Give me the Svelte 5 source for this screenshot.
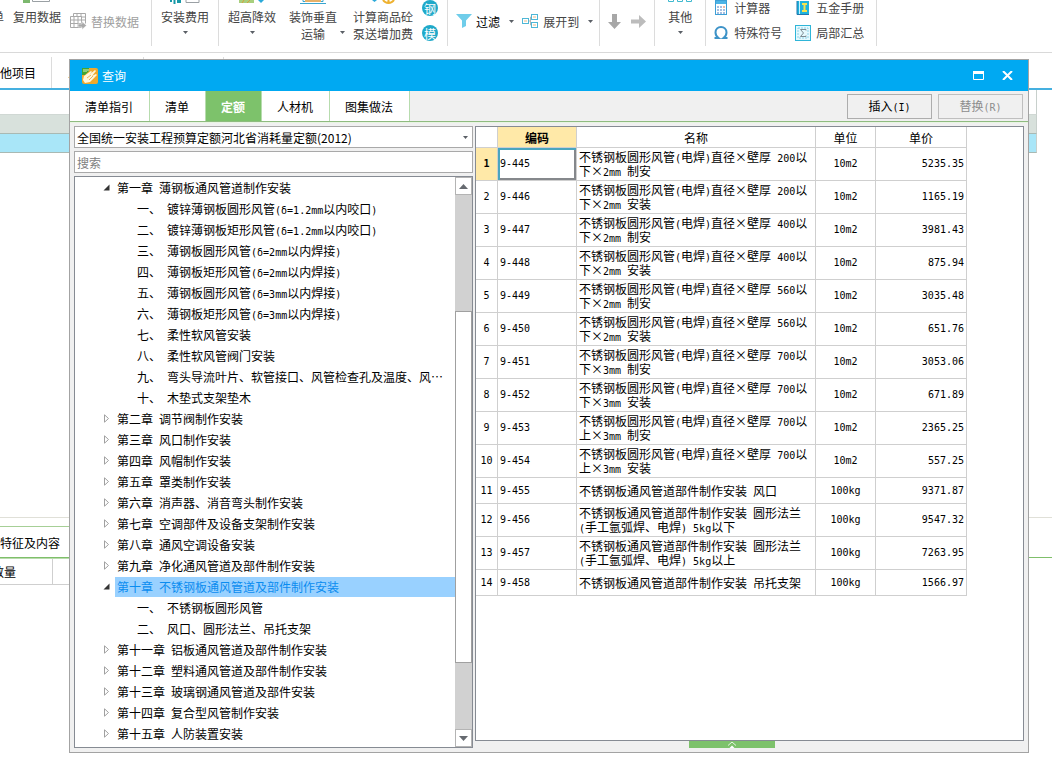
<script>
    const dialogTabs = ["清单指引", "清单", "定额", "人材机", "图集做法"];
    let activeTab = $state("定额");
    let keyword = $state("");
    let selectedChapter = $state("第十章 不锈钢板通风管道及部件制作安装");
    let selectedCode = $state("9-445");

    const tree = [
        { level: 1, open: true, label: "第一章 薄钢板通风管道制作安装" },
        { level: 2, label: "一、 镀锌薄钢板圆形风管(δ=1.2mm以内咬口)" },
        { level: 2, label: "二、 镀锌薄钢板矩形风管(δ=1.2mm以内咬口)" },
        { level: 2, label: "三、 薄钢板圆形风管(δ=2mm以内焊接)" },
        { level: 2, label: "四、 薄钢板矩形风管(δ=2mm以内焊接)" },
        { level: 2, label: "五、 薄钢板圆形风管(δ=3mm以内焊接)" },
        { level: 2, label: "六、 薄钢板矩形风管(δ=3mm以内焊接)" },
        { level: 2, label: "七、 柔性软风管安装" },
        { level: 2, label: "八、 柔性软风管阀门安装" },
        { level: 2, label: "九、 弯头导流叶片、软管接口、风管检查孔及温度、风⋯" },
        { level: 2, label: "十、 木垫式支架垫木" },
        { level: 1, label: "第二章 调节阀制作安装" },
        { level: 1, label: "第三章 风口制作安装" },
        { level: 1, label: "第四章 风帽制作安装" },
        { level: 1, label: "第五章 罩类制作安装" },
        { level: 1, label: "第六章 消声器、消音弯头制作安装" },
        { level: 1, label: "第七章 空调部件及设备支架制作安装" },
        { level: 1, label: "第八章 通风空调设备安装" },
        { level: 1, label: "第九章 净化通风管道及部件制作安装" },
        { level: 1, open: true, label: "第十章 不锈钢板通风管道及部件制作安装" },
        { level: 2, label: "一、 不锈钢板圆形风管" },
        { level: 2, label: "二、 风口、圆形法兰、吊托支架" },
        { level: 1, label: "第十一章 铝板通风管道及部件制作安装" },
        { level: 1, label: "第十二章 塑料通风管道及部件制作安装" },
        { level: 1, label: "第十三章 玻璃钢通风管道及部件安装" },
        { level: 1, label: "第十四章 复合型风管制作安装" },
        { level: 1, label: "第十五章 人防装置安装" },
    ];

    const duct = "不锈钢板圆形风管(电焊)直径×壁厚 ";
    const part = "不锈钢板通风管道部件制作安装 ";
    const items = [
        { code: "9-445", name: duct + "200以\n下×2mm 制安", unit: "10m2", price: "5235.35" },
        { code: "9-446", name: duct + "200以\n下×2mm 安装", unit: "10m2", price: "1165.19" },
        { code: "9-447", name: duct + "400以\n下×2mm 制安", unit: "10m2", price: "3981.43" },
        { code: "9-448", name: duct + "400以\n下×2mm 安装", unit: "10m2", price: "875.94" },
        { code: "9-449", name: duct + "560以\n下×2mm 制安", unit: "10m2", price: "3035.48" },
        { code: "9-450", name: duct + "560以\n下×2mm 安装", unit: "10m2", price: "651.76" },
        { code: "9-451", name: duct + "700以\n下×3mm 制安", unit: "10m2", price: "3053.06" },
        { code: "9-452", name: duct + "700以\n下×3mm 安装", unit: "10m2", price: "671.89" },
        { code: "9-453", name: duct + "700以\n上×3mm 制安", unit: "10m2", price: "2365.25" },
        { code: "9-454", name: duct + "700以\n上×3mm 安装", unit: "10m2", price: "557.25" },
        { code: "9-455", name: part + "风口", unit: "100kg", price: "9371.87" },
        { code: "9-456", name: part + "圆形法兰\n(手工氩弧焊、电焊) 5kg以下", unit: "100kg", price: "9547.32" },
        { code: "9-457", name: part + "圆形法兰\n(手工氩弧焊、电焊) 5kg以上", unit: "100kg", price: "7263.95" },
        { code: "9-458", name: part + "吊托支架", unit: "100kg", price: "1566.97" },
    ];

    // half-width runs get the monospaced face
    function runs(text) {
        return text.split(/([ -~δ]+)/).filter(Boolean).map((t) => ({ t, half: /^[ -~δ]/.test(t) }));
    }
</script>

{#snippet mixed(text)}{#each runs(text) as run}{#if run.half}<span class="half">{run.t}</span>{:else}{run.t}{/if}{/each}{/snippet}

{#snippet caret()}
    <svg class="caret" width="5" height="3" viewBox="0 0 5 3" aria-hidden="true"><path d="M0 0h5L2.5 3z" fill="#5a5f66" /></svg>
{/snippet}

<div class="app">
    <header class="ribbon">
        <div class="group first">
            <button class="big"><span class="slot"></span>单</button>
            <button class="big">
                <span class="slot">
                    <svg width="28" height="3" viewBox="0 0 28 3"><path d="M0 3V0h7v3z" fill="#7cb86e" /><path d="M9.500 0v1.500h17V0" fill="none" stroke="#9aa0a4" /></svg>
                </span>
                复用数据
            </button>
            <button class="inline muted">
                <svg width="17" height="17" viewBox="0 0 17 17" fill="none" stroke="#a9a9a9">
                    <path d="M3.500.5h12v10M3.500.5v3M.5 3.500h11v11H.5zM.5 7h11M.5 10.500h11M4 3.500v11M8 3.500v11M7 .5v3M11 .5v3M15 4h-4M15 7h-4" />
                    <path d="M8 11h4V8.500l4.500 4-4.500 4V14H8z" fill="#a9a9a9" stroke="#fff" stroke-width=".5" />
                </svg>
                替换数据
            </button>
        </div>
        <div class="group">
            <button class="big">
                <span class="slot">
                    <svg width="30" height="4" viewBox="0 0 30 4"><path d="M1 0v2M4.500 0v4M8 0v3M10 0v3" stroke="#1899a8" stroke-width="2" /><path d="M16 0v2.500h13V0" fill="none" stroke="#9aa0a4" /></svg>
                </span>
                安装费用
                {@render caret()}
            </button>
        </div>
        <div class="group">
            <button class="big">
                <span class="slot">
                    <svg width="26" height="4" viewBox="0 0 26 4"><path d="M0 0h15v3H0z" fill="#a8cf7d" /><path d="M3 3l2-3M8 3l3-3" stroke="#d99c3c" /><path d="M19 0h6l-3 3z" fill="#2ba9d9" /></svg>
                </span>
                超高降效
                {@render caret()}
            </button>
            <button class="big">
                <span class="slot">
                    <svg width="26" height="4" viewBox="0 0 26 4"><path d="M3 0v1.500h20V0M0 3.500h26" fill="none" stroke="#37a5d0" /><path d="M5 0h16v2H5z" fill="#e6b169" /></svg>
                </span>
                装饰垂直<br />运输
            </button>
            <span class="side-caret">{@render caret()}</span>
            <button class="big">
                <span class="slot">
                    <svg width="28" height="4" viewBox="0 0 28 4"><path d="M3 0h5L5.500 2z" fill="#2ba9d9" /><path d="M14 0q2 3 5.500 3T25 0M19.500 0v3" fill="none" stroke="#eeb12f" stroke-width="2" /></svg>
                </span>
                计算商品砼<br />泵送增加费
            </button>
            <div class="rounds">
                <button class="round">钢</button>
                <button class="round">模</button>
            </div>
        </div>
        <div class="group filters">
            <button class="inline dark">
                <svg width="16" height="14" viewBox="0 0 16 14"><path d="M0 0h16l-6 6.500V12l-4 2V6.500z" fill="#6fcdea" /></svg>
                过滤
                {@render caret()}
            </button>
            <button class="inline">
                <svg width="17" height="15" viewBox="0 0 17 15" fill="none">
                    <path d="M6 7h2.500M8.500 3v8H10M8.500 3H10" stroke="#b5b5b5" />
                    <rect x=".5" y="4.500" width="6" height="5" stroke="#4fb7d6" />
                    <rect x="9.500" y=".5" width="6" height="5" stroke="#4fb7d6" />
                    <rect x="9.500" y="8.500" width="6" height="5" stroke="#4fb7d6" />
                    <path d="M2 7h3M11 3h3M11 11h3" stroke="#e8b984" />
                </svg>
                展开到
                {@render caret()}
            </button>
        </div>
        <div class="group arrows">
            <button class="inline" aria-label="下移"><svg width="13" height="15" viewBox="0 0 13 15"><path d="M4 0h5v8h4l-6.500 7L0 8h4z" fill="#a7a7a7" /></svg></button>
            <button class="inline" aria-label="右移"><svg width="15" height="13" viewBox="0 0 15 13"><path d="M0 4.500h8V0l7 6.500L8 13V8.500H0z" fill="#bcbcbc" /></svg></button>
        </div>
        <div class="group">
            <button class="big">
                <span class="slot">
                    <svg width="26" height="3" viewBox="0 0 26 3" fill="none" stroke="#3fb9cf"><path d="M1.500 0v1.500h5V0M10.500 0v1.500h5V0M19.500 0v1.500h5V0" /></svg>
                </span>
                其他
                {@render caret()}
            </button>
        </div>
        <div class="group tools">
            <button class="tool">
                <svg width="16" height="16" viewBox="0 0 16 16"><rect x="2.500" y=".5" width="11" height="14" fill="#fff" stroke="#3d9fd6" /><path d="M3 1h10v3H3z" fill="#4db4e6" /><path d="M4 7h2M7 7h2M4 10h2M7 10h2M4 13h2M7 13h2M10 10h2M10 13h2" stroke="#4d7fc4" /><path d="M10 7h2" stroke="#e07050" /></svg>
                计算器
            </button>
            <button class="tool">
                <svg width="16" height="16" viewBox="0 0 16 16"><path d="M2 1h12v13H2z" fill="#1fb3dd" /><path d="M2 1v13.500h12" fill="none" stroke="#2277ad" /><path d="M4.500 1v13" stroke="#c8f0ff" /><path d="M7 4h5M7 11h5M9.500 4v7" stroke="#f6e34f" stroke-width="2" /></svg>
                五金手册
            </button>
            <button class="tool">
                <svg width="16" height="16" viewBox="0 0 16 16"><path d="M1.500 13h4c-2-1.500-3-3.500-3-5.500C2.500 4 5 2 8 2s5.500 2 5.500 5.500c0 2-1 4-3 5.500h4" fill="none" stroke="#3d93c8" stroke-width="2" /></svg>
                特殊符号
            </button>
            <button class="tool">
                <svg width="16" height="16" viewBox="0 0 16 16" fill="none"><rect x=".5" y=".5" width="15" height="15" fill="#e4f9fe" stroke="#2fb5d8" /><path d="M3 3h10v10H3z" stroke="#8ed2e8" stroke-dasharray="2 1" /><path d="M11 5.500V4.500H5.500L8.500 8l-3 3.500H11v-1" stroke="#7d8b92" /></svg>
                局部汇总
            </button>
        </div>
    </header>

    <nav class="page-tabs">
        <a href="#other">其他项目</a>
        <a href="#labour">人材机汇总</a>
        <a href="#fee">费用汇总</a>
    </nav>

    <div class="sheet">
        <div class="line"></div>
        <div class="line summary"></div>
        <div class="line current"></div>
    </div>
    <div class="detail">
        <div class="detail-tabs"><a href="#feature">特征及内容</a></div>
        <div class="detail-head"><span>数量</span></div>
    </div>

    <section class="dialog" role="dialog" aria-labelledby="dialog-title">
        <div class="titlebar">
            <svg width="16" height="16" viewBox="0 0 16 16">
                <rect width="16" height="16" rx="2" fill="#f0a92c" />
                <path d="M0 0h7v3L3 7H0z" fill="#3fa535" />
                <path d="M2 1v3M4 1v3M6 1v2" stroke="#d9f2c4" />
                <path d="M2 8l7-5 1 1-3 3 6-5 1 1-4 5 4-2 1 1-7 7-5 1-2-3z" fill="#fff6dc" />
                <path d="M5 10l4-3M7 12l4-4" stroke="#eab35c" />
            </svg>
            <h1 id="dialog-title">查询</h1>
            <button aria-label="最大化"><svg width="11" height="9" viewBox="0 0 11 9"><path d="M.5.500h10v8H.5z" fill="none" stroke="#fff" /><path d="M0 0h11v3H0z" fill="#fff" /></svg></button>
            <button aria-label="关闭"><svg width="11" height="9" viewBox="0 0 11 9"><path d="M1 0l9 9M10 0L1 9" stroke="#fff" stroke-width="2" /></svg></button>
        </div>

        <div class="tabbar">
            {#each dialogTabs as tab}
                <button class="tab" class:active={tab === activeTab} onclick={() => (activeTab = tab)}>{tab}</button>
            {/each}
            <div class="actions">
                <button>{@render mixed("插入(I)")}</button>
                <button disabled>{@render mixed("替换(R)")}</button>
            </div>
        </div>

        <div class="body">
            <div class="left">
                <div class="combo">
                    <select aria-label="定额库">
                        <option>全国统一安装工程预算定额河北省消耗量定额(2012)</option>
                    </select>
                    {@render caret()}
                </div>
                <input class="search" type="text" placeholder="搜索" aria-label="搜索" bind:value={keyword} />
                <div class="tree-box">
                    <ul class="tree">
                        {#each tree as node}
                            <li class:child={node.level === 2}>
                                {#if node.level === 1}
                                    <svg class="twisty" width="7" height="9" viewBox="0 0 7 9" aria-hidden="true">
                                        {#if node.open}
                                            <path d="M6.500 1.500v6H.5z" fill="#333" />
                                        {:else}
                                            <path d="M1.500.8v7.400L5.500 4.500z" fill="none" stroke="#a0a0a0" />
                                        {/if}
                                    </svg>
                                {/if}
                                <button class:selected={node.label === selectedChapter} onclick={() => (selectedChapter = node.label)}>{@render mixed(node.label)}</button>
                            </li>
                        {/each}
                    </ul>
                    <div class="scrollbar" aria-hidden="true">
                        <span class="step"><svg width="9" height="5" viewBox="0 0 9 5"><path d="M0 5h9L4.500 0z" fill="#666a70" /></svg></span>
                        <span class="before"></span>
                        <span class="thumb"></span>
                        <span class="after"></span>
                        <span class="step"><svg width="9" height="5" viewBox="0 0 9 5"><path d="M0 0h9L4.500 5z" fill="#666a70" /></svg></span>
                    </div>
                </div>
            </div>

            <div class="right">
                <div class="grid-box">
                    <table>
                        <colgroup>
                            <col class="c-no" />
                            <col class="c-code" />
                            <col class="c-name" />
                            <col class="c-unit" />
                            <col class="c-price" />
                        </colgroup>
                        <thead>
                            <tr>
                                <th></th>
                                <th class="hot">编码</th>
                                <th>名称</th>
                                <th>单位</th>
                                <th>单价</th>
                            </tr>
                        </thead>
                        <tbody>
                            {#each items as item, i}
                                <tr class:tall={item.name.includes("\n")} onclick={() => (selectedCode = item.code)}>
                                    <td class="no half" class:hot={item.code === selectedCode}>{i + 1}</td>
                                    <td class="half" class:focus={item.code === selectedCode}>{item.code}</td>
                                    <td class="name">{@render mixed(item.name)}</td>
                                    <td class="unit half">{item.unit}</td>
                                    <td class="price half">{item.price}</td>
                                </tr>
                            {/each}
                        </tbody>
                    </table>
                </div>
                <button class="handle" aria-label="展开">
                    <svg width="10" height="7" viewBox="0 0 10 7"><path d="M1 4.500l4-3.500 4 3.500" fill="none" stroke="#e8f5e2" /><path d="M2.500 7L5 4.500 7.500 7z" fill="#fff" /></svg>
                </button>
            </div>
        </div>
    </section>
</div>

<style>
    :global(body) {
        background: #fff;
    }

    .app {
        position: relative;
        display: flex;
        flex-direction: column;
        min-height: 100vh;
        overflow: hidden;
        font-family: "Noto Sans CJK SC", "Liberation Sans", sans-serif;
        font-size: 12px;
        line-height: 17px;
        color: #000;
    }

    button,
    input,
    select {
        margin: 0;
        padding: 0;
        border: 0;
        border-radius: 0;
        background: none;
        font: inherit;
        color: inherit;
    }

    svg {
        display: block;
        flex: none;
    }

    a {
        color: inherit;
        text-decoration: none;
    }

    .half {
        font-family: "DejaVu Sans Mono", monospace;
        font-size: 10px;
    }

    /* ribbon */
    .ribbon {
        display: flex;
        align-items: flex-start;
        height: 52px;
        border-bottom: 1px solid #d9d9d9;
        color: #444;
        white-space: nowrap;
    }

    .group {
        display: flex;
        align-items: flex-start;
        height: 46px;
        padding: 0 9px;
        border-right: 1px solid #dcdcdc;
    }

    .group.first {
        gap: 9px;
        margin-left: -17px;
        padding-right: 12px;
    }

    .big {
        display: block;
        line-height: 17px;
        text-align: center;
    }

    .big .slot {
        display: flex;
        justify-content: center;
        height: 8px;
    }

    .big .caret {
        margin: 6px auto 0;
    }

    .big + .big {
        margin-left: 13px;
    }

    .group.first .big + .big {
        margin-left: 0;
    }

    .side-caret {
        padding: 31px 8px 0 3px;
    }

    .rounds {
        display: grid;
        gap: 9px;
        margin-left: 9px;
    }

    .round {
        width: 16px;
        height: 16px;
        border-radius: 50%;
        background: #1fa9c9;
        color: #fff;
        font-size: 12px;
        line-height: 15px;
    }

    .inline {
        display: flex;
        align-items: center;
        gap: 4px;
        height: 42px;
    }

    .inline .caret {
        margin-left: 5px;
    }

    .muted {
        color: #a0a0a0;
    }

    .dark {
        color: #000;
    }

    .group.filters {
        gap: 8px;
        padding: 0 6px 0 8px;
    }

    .group.arrows {
        gap: 10px;
        height: 39px;
        padding: 0 8px;
    }

    .group.arrows + .group {
        padding: 0 12px;
        border-left: 1px solid #dcdcdc;
        margin-left: -1px;
    }

    .group.tools {
        display: grid;
        grid-template-columns: auto auto;
        grid-auto-rows: 16px;
        gap: 9px 13px;
        padding: 0 12px 0 7px;
    }

    .tool {
        display: flex;
        align-items: center;
        gap: 5px;
        height: 15px;
    }

    /* page behind the dialog */
    .page-tabs {
        display: flex;
        padding-top: 4px;
        border-bottom: 2px solid #45b0e0;
        margin-left: -28px;
    }

    .page-tabs a {
        padding: 7px 15px 7px 16px;
        border-right: 1px solid #dcdcdc;
    }

    .sheet {
        flex: 1;
        margin-right: 15px;
    }

    .line {
        height: 24px;
        border-right: 1px solid #c8d0cc;
        border-bottom: 1px solid #d0d8d4;
    }

    .line.summary,
    .line.current {
        height: 18px;
        background: #d8e1dc;
        border-bottom-color: #a9b9b3;
    }

    .line.current {
        background: #a9e6f8;
    }

    .detail {
        height: 241px;
        border-top: 1px solid #e0e0d8;
    }

    .detail-tabs {
        margin-top: 8px;
        border-bottom: 1px solid #7fbf6a;
    }

    .detail-tabs a {
        display: block;
        width: 90%;
        padding: 7px 0 6px;
        border-top: 1px solid #a6cf96;
    }

    .detail-head {
        display: flex;
        width: 90%;
        border-top: 1px solid #b9dcae;
        border-bottom: 1px solid #cfcfcf;
    }

    .detail-head span {
        margin-left: -8px;
        padding: 4px 36px 4px 0;
        border-right: 1px solid #cfcfcf;
    }

    /* dialog */
    .dialog {
        position: absolute;
        inset: 59px 23px 6px 69px;
        display: flex;
        flex-direction: column;
        border: 1px solid #a3a3a3;
        background: #f0f0f0;
    }

    .titlebar {
        display: flex;
        align-items: center;
        height: 31px;
        padding: 0 6px 0 12px;
        background: #00a9f2;
        color: #fff;
    }

    .titlebar h1 {
        flex: 1;
        margin: 0 0 0 4px;
        font-size: 12px;
        font-weight: 400;
    }

    .titlebar button {
        display: grid;
        place-items: center;
        width: 29px;
        height: 27px;
    }

    .tabbar {
        display: flex;
        height: 30px;
        border-bottom: 1px solid #8fbb80;
    }

    .tab {
        padding: 0 16px 0 15px;
        border-right: 1px solid #b7dcae;
        background: #fff;
    }

    .tab.active {
        background: #7dc26b;
        color: #fff;
        font-weight: 700;
    }

    .actions {
        display: flex;
        gap: 6px;
        margin-left: auto;
        padding: 3px 5px 2px;
    }

    .actions button {
        width: 85px;
        border: 1px solid #adadad;
        background: #f0f0f0;
    }

    .actions button:disabled {
        border-color: #bfbfbf;
        color: #8d8d8d;
    }

    .body {
        flex: 1;
        display: grid;
        grid-template-columns: 399px 1fr;
        gap: 2px;
        padding: 3px 4px 4px;
        border-top: 1px solid #e8f4e2;
    }

    .left,
    .right {
        display: flex;
        flex-direction: column;
        min-width: 0;
    }

    .left {
        gap: 3px;
    }

    .combo {
        position: relative;
    }

    .combo select,
    .search {
        display: block;
        box-sizing: border-box;
        width: 100%;
        height: 22px;
        padding: 0 2px;
        border: 1px solid #a9a9a9;
        background: #fff;
        appearance: none;
    }

    .combo .caret {
        position: absolute;
        top: 10px;
        right: 5px;
    }

    .search::placeholder {
        color: #808080;
        opacity: 1;
    }

    .tree-box {
        flex: 1;
        display: flex;
        border: 1px solid #868b93;
        background: #fff;
    }

    .tree {
        flex: 1;
        min-width: 0;
        margin: 0;
        padding: 0 0 0 28px;
        list-style: none;
    }

    .tree li {
        display: flex;
        align-items: center;
        gap: 5px;
        height: 21px;
    }

    .tree li.child {
        padding-left: 32px;
    }

    .tree button {
        flex: 1;
        height: 20px;
        padding-left: 2px;
        text-align: left;
        white-space: pre;
    }

    .tree button.selected {
        background: #99d1ff;
        color: #0a8cf0;
    }

    .scrollbar {
        display: flex;
        flex-direction: column;
        width: 17px;
        background: #d1d1d1;
    }

    .step {
        display: grid;
        place-items: center;
        height: 16px;
        border: 1px solid #b4b4b4;
        background: #fff;
    }

    .before {
        flex: 117;
    }

    .thumb {
        flex: 352;
        border: 1px solid #a0a0a0;
        background: #fff;
    }

    .after {
        flex: 66;
    }

    .grid-box {
        flex: 1;
        border: 1px solid #868b93;
        background: #fff;
    }

    table {
        table-layout: fixed;
        width: 491px;
        border-collapse: separate;
        border-spacing: 0;
    }

    .c-no {
        width: 22px;
    }

    .c-code {
        width: 79px;
    }

    .c-name {
        width: 239px;
    }

    .c-unit {
        width: 60px;
    }

    .c-price {
        width: 91px;
    }

    th,
    td {
        padding: 0 2px;
        border-right: 1px solid #cfcfcf;
        border-bottom: 1px solid #cfcfcf;
    }

    th {
        height: 20px;
        font-weight: 400;
    }

    td {
        height: 25px;
        line-height: 14px;
    }

    .tall td {
        height: 32px;
    }

    .hot {
        background: #ffe9a8;
        font-weight: 700;
    }

    .no,
    .unit {
        text-align: center;
    }

    .name {
        white-space: pre;
    }

    .name .half,
    .tree .half {
        line-height: 1;
    }

    .price {
        text-align: right;
    }

    .focus {
        box-shadow: inset 2px 2px #4aa5bf, inset -2px -2px #85888c;
    }

    .handle {
        display: grid;
        place-items: center;
        width: 86px;
        height: 7px;
        margin-left: 39%;
        background: #7dc26b;
    }
</style>
